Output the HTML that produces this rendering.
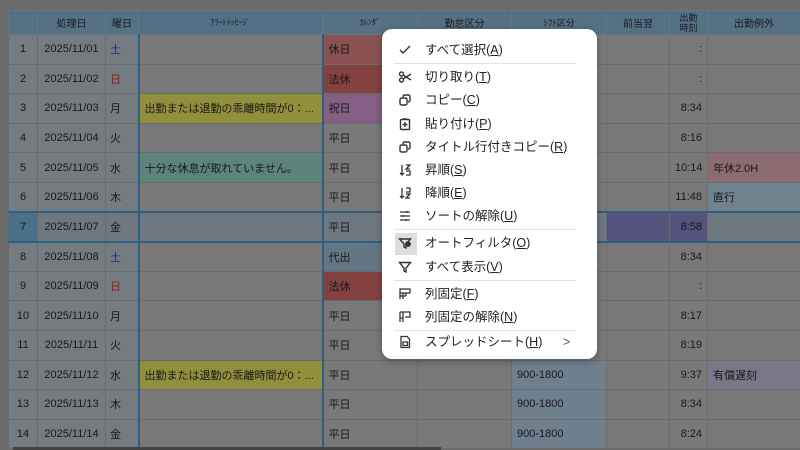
<!DOCTYPE html>
<html><head><meta charset="utf-8"><style>
*{margin:0;padding:0;box-sizing:border-box}
body{width:800px;height:450px;overflow:hidden;background:#8b8b8b;font-family:"Liberation Sans","Noto Sans CJK JP",sans-serif;position:relative}
table{position:absolute;left:8px;top:10px;border-collapse:collapse;table-layout:fixed;width:792px;font-size:11px;color:#222}
td,th{border:1px solid #8a8a8a;height:29.6px;white-space:nowrap;overflow:hidden;background:#9c9c9c;padding:0 5px}
th{height:24px;background:#6f91a6;font-weight:normal;font-size:10px;text-align:center;color:#223;border-color:#7f9aab}
th.al{background:#6a8fa8}
td.n{text-align:center;background:#959fa6;padding:0}
td.d{text-align:center;background:#959fa6}
td.w{background:#959fa6;padding-left:4px}
td.a{border-left:2px solid #3a7aa6;border-right:2px solid #3a7aa6}
td.t{text-align:right;padding-right:5px}
tr.sel td{background:#8e9aa4;border-top:2px solid #3a7aa6;border-bottom:2px solid #3a7aa6}
tr.sel td.n{background:#5f8fb0}
tr.sel td.p{background:#6e6aa2}
.r{color:#b22}.b{color:#33a}
.y{background:#bcb84e!important}
.g{background:#77aa9f!important}
.hol{background:#b06a68!important}
.law{background:#a85452!important}
.sh{background:#a87ca8!important}
.dai{background:#7e98aa!important}
.pk{background:#b48b94!important}
.lb{background:#8fa8b6!important}
.pu{background:#9a9ab0!important}
.sf{background:#8ea3b6!important}
#ov{position:absolute;left:0;top:0;width:800px;height:450px;background:rgba(0,0,0,.22)}
#menu{position:absolute;left:382px;top:29px;width:215px;height:330px;background:#fff;border-radius:10px;box-shadow:0 2px 8px rgba(0,0,0,.3);font-size:12.5px;color:#222}
.it{position:absolute;left:0;height:20px;line-height:20px;width:100%}
.it .tx{position:absolute;left:43px}
.it svg{position:absolute;left:16px;top:3px}
.sep{position:absolute;left:12px;width:183px;height:1px;background:#e2e2e2}
u{text-decoration:underline}
#sb{position:absolute;left:13px;top:447px;width:428px;height:3px;background:#555}
</style></head><body>
<table>
<colgroup><col style="width:29px"><col style="width:68px"><col style="width:33px"><col style="width:184px"><col style="width:95px"><col style="width:94px"><col style="width:95px"><col style="width:63px"><col style="width:38px"><col style="width:93px"></colgroup>
<tr><th></th><th>処理日</th><th>曜日</th><th class="al" style="font-size:8px">ｱﾗｰﾄﾒｯｾｰｼﾞ</th><th style="font-size:8px">ｶﾚﾝﾀﾞ</th><th>勤怠区分</th><th style="font-size:9px">ｼﾌﾄ区分</th><th>前当翌</th><th style="font-size:9px;line-height:10px;padding:0">出勤<br>時刻</th><th>出勤例外</th></tr>
<tr><td class="n">1</td><td class="d">2025/11/01</td><td class="w b">土</td><td class="a"></td><td class="hol">休日</td><td></td><td></td><td></td><td class="t">:</td><td></td></tr>
<tr><td class="n">2</td><td class="d">2025/11/02</td><td class="w r">日</td><td class="a"></td><td class="law">法休</td><td></td><td></td><td></td><td class="t">:</td><td></td></tr>
<tr><td class="n">3</td><td class="d">2025/11/03</td><td class="w">月</td><td class="a y">出勤または退勤の乖離時間が0：...</td><td class="sh">祝日</td><td></td><td></td><td></td><td class="t">8:34</td><td></td></tr>
<tr><td class="n">4</td><td class="d">2025/11/04</td><td class="w">火</td><td class="a"></td><td>平日</td><td></td><td></td><td></td><td class="t">8:16</td><td></td></tr>
<tr><td class="n">5</td><td class="d">2025/11/05</td><td class="w">水</td><td class="a g">十分な休息が取れていません。</td><td>平日</td><td></td><td></td><td></td><td class="t">10:14</td><td class="pk">年休2.0H</td></tr>
<tr><td class="n">6</td><td class="d">2025/11/06</td><td class="w">木</td><td class="a"></td><td>平日</td><td></td><td></td><td></td><td class="t">11:48</td><td class="lb">直行</td></tr>
<tr class="sel"><td class="n">7</td><td class="d">2025/11/07</td><td class="w">金</td><td class="a"></td><td>平日</td><td></td><td></td><td class="p"></td><td class="t p">8:58</td><td></td></tr>
<tr><td class="n">8</td><td class="d">2025/11/08</td><td class="w b">土</td><td class="a"></td><td class="dai">代出</td><td></td><td></td><td></td><td class="t">8:34</td><td></td></tr>
<tr><td class="n">9</td><td class="d">2025/11/09</td><td class="w r">日</td><td class="a"></td><td class="law">法休</td><td></td><td></td><td></td><td class="t">:</td><td></td></tr>
<tr><td class="n">10</td><td class="d">2025/11/10</td><td class="w">月</td><td class="a"></td><td>平日</td><td></td><td></td><td></td><td class="t">8:17</td><td></td></tr>
<tr><td class="n">11</td><td class="d">2025/11/11</td><td class="w">火</td><td class="a"></td><td>平日</td><td></td><td></td><td></td><td class="t">8:19</td><td></td></tr>
<tr><td class="n">12</td><td class="d">2025/11/12</td><td class="w">水</td><td class="a y">出勤または退勤の乖離時間が0：...</td><td>平日</td><td></td><td class="sf">900-1800</td><td></td><td class="t">9:37</td><td class="pu">有償遅刻</td></tr>
<tr><td class="n">13</td><td class="d">2025/11/13</td><td class="w">木</td><td class="a"></td><td>平日</td><td></td><td class="sf">900-1800</td><td></td><td class="t">8:34</td><td></td></tr>
<tr><td class="n">14</td><td class="d">2025/11/14</td><td class="w">金</td><td class="a"></td><td>平日</td><td></td><td class="sf">900-1800</td><td></td><td class="t">8:24</td><td></td></tr>
</table>
<div id="sb"></div>
<div id="ov"></div>
<div id="menu">
<div class="it" style="top:11px"><svg width="14" height="14" viewBox="0 0 14 14" fill="none" stroke="#333" stroke-width="1.4"><path d="M2 7l3 3 7-7"/></svg><span class="tx">すべて選択(<u>A</u>)</span></div>
<div class="sep" style="top:34px"></div>
<div class="it" style="top:38px"><svg width="14" height="14" viewBox="0 0 14 14" fill="none" stroke="#333" stroke-width="1.4"><circle cx="3.5" cy="4" r="2"/><circle cx="3.5" cy="10" r="2"/><path d="M5 5l8 5M5 9l8-5"/></svg><span class="tx">切り取り(<u>T</u>)</span></div>
<div class="it" style="top:61px"><svg width="14" height="14" viewBox="0 0 14 14" fill="none" stroke="#333" stroke-width="1.4"><rect x="2" y="5" width="7" height="7" rx="1.5"/><path d="M5 4V3.5A1.5 1.5 0 0 1 6.5 2h4A1.5 1.5 0 0 1 12 3.5v4A1.5 1.5 0 0 1 10.5 9H10"/></svg><span class="tx">コピー(<u>C</u>)</span></div>
<div class="it" style="top:85px"><svg width="14" height="14" viewBox="0 0 14 14" fill="none" stroke="#333" stroke-width="1.4"><rect x="2.5" y="2.5" width="9" height="10" rx="1"/><path d="M5 2h4M7 5v5M4.5 7.5h5"/></svg><span class="tx">貼り付け(<u>P</u>)</span></div>
<div class="it" style="top:108px"><svg width="14" height="14" viewBox="0 0 14 14" fill="none" stroke="#333" stroke-width="1.4"><rect x="2" y="5" width="7" height="7" rx="1.5"/><path d="M5 4V3.5A1.5 1.5 0 0 1 6.5 2h4A1.5 1.5 0 0 1 12 3.5v4A1.5 1.5 0 0 1 10.5 9H10"/></svg><span class="tx">タイトル行付きコピー(<u>R</u>)</span></div>
<div class="it" style="top:131px"><svg width="14" height="14" viewBox="0 0 14 14" fill="none" stroke="#333" stroke-width="1.3"><path d="M4 2v10M2 10l2 2 2-2M8 2h4l-4 4h4M8 8h4v4H8"/></svg><span class="tx">昇順(<u>S</u>)</span></div>
<div class="it" style="top:154px"><svg width="14" height="14" viewBox="0 0 14 14" fill="none" stroke="#333" stroke-width="1.3"><path d="M4 2v10M2 10l2 2 2-2M8 2h4v4H8M8 8h4l-4 4h4"/></svg><span class="tx">降順(<u>E</u>)</span></div>
<div class="it" style="top:177px"><svg width="14" height="14" viewBox="0 0 14 14" fill="none" stroke="#333" stroke-width="1.3"><path d="M2 3h10M2 7h10M2 11h10M9 2v2M5 6v2M8 10v2"/></svg><span class="tx">ソートの解除(<u>U</u>)</span></div>
<div class="sep" style="top:200px"></div>
<div style="position:absolute;left:13px;top:204px;width:22px;height:22px;background:#ddd"></div>
<div class="it" style="top:204px"><svg width="14" height="14" viewBox="0 0 14 14" fill="none" stroke="#333" stroke-width="1.4"><path d="M1.5 3h11L8 8v4l-2-1V8z"/><circle cx="10" cy="8" r="2.2" fill="#333"/></svg><span class="tx">オートフィルタ(<u>O</u>)</span></div>
<div class="it" style="top:228px"><svg width="14" height="14" viewBox="0 0 14 14" fill="none" stroke="#333" stroke-width="1.4"><path d="M1.5 2.5h11L8 8v4l-2-1V8z"/></svg><span class="tx">すべて表示(<u>V</u>)</span></div>
<div class="sep" style="top:251px"></div>
<div class="it" style="top:255px"><svg width="14" height="14" viewBox="0 0 14 14" fill="none" stroke="#333" stroke-width="1.3"><path d="M2 2h10v4H2zM2 2v10M5 6v6M8 6v3M2 9h6"/></svg><span class="tx">列固定(<u>F</u>)</span></div>
<div class="it" style="top:278px"><svg width="14" height="14" viewBox="0 0 14 14" fill="none" stroke="#333" stroke-width="1.3"><path d="M2 2h10v5H7M2 2v10M5 2v10M2 8h3"/></svg><span class="tx">列固定の解除(<u>N</u>)</span></div>
<div class="sep" style="top:301px"></div>
<div class="it" style="top:303px"><svg width="14" height="14" viewBox="0 0 14 14" fill="none" stroke="#333" stroke-width="1.3"><path d="M3 1.5h6l2.5 2.5v8.5H3z"/><rect x="5" y="7" width="4.5" height="3.5"/></svg><span class="tx">スプレッドシート(<u>H</u>)</span><span style="position:absolute;left:181px;color:#555">&gt;</span></div>
</div>
</body></html>
